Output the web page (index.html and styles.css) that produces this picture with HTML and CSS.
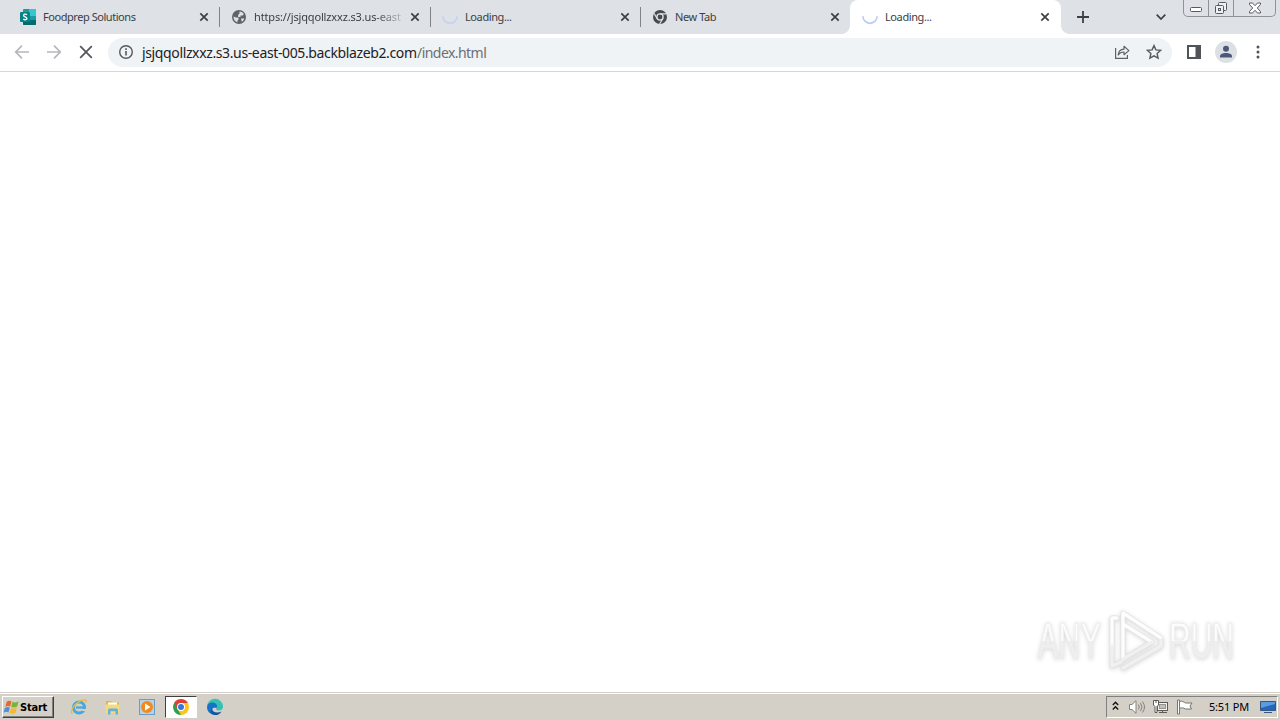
FILE: index.html
```
<!DOCTYPE html>
<html lang="en">
<head>
  <meta charset="UTF-8">
  <title>Loading...</title>
  <link rel="stylesheet" href="styles.css">
</head>
<body>
  <svg class="defs" width="0" height="0">
    <symbol id="close" viewBox="0 0 10 10"><path d="M1.3 1.3 8.7 8.7M8.7 1.3 1.3 8.7" fill="none" stroke="#3c4043" stroke-width="1.7"/></symbol>
    <symbol id="spinner" viewBox="0 0 16 16"><path d="M.9 7.2a7.1 7.1 0 0 0 14.2 0" fill="none" stroke="currentColor" stroke-width="1.7"/></symbol>
  </svg>

  <div class="tabs">
    <div class="tab first">
      <svg class="favicon" viewBox="0 0 16 16">
        <rect x="3" width="13" height="16" rx="1" fill="#1a9ba1"/>
        <path d="M9 0h6q1 0 1 1v6H9z" fill="#37c6d0"/>
        <path d="M3 11h13v4q0 1-1 1H4q-1 0-1-1z" fill="#036c70"/>
        <rect y="3" width="10" height="10" rx="1" fill="#038387"/>
        <path d="M7 5.6C5.8 4.9 3.6 4.9 3.6 6.4c0 1.7 3.3 1.3 3.3 3 0 1.4-2 1.6-3.6.8" fill="none" stroke="#fff" stroke-width="1.4"/>
      </svg>
      <span class="title title-food">Foodprep Solutions</span>
      <svg class="close"><use href="#close"/></svg>
    </div>
    <div class="tab">
      <svg class="favicon" viewBox="0 0 16 16">
        <circle cx="8" cy="8" r="7" fill="#5f6368"/>
        <path d="M2.600 7.500 5 8.500h2.500v2l-1 1v1.800C4 12.600 2.200 10.500 2.600 7.500zM8.500 2.600c2 0 3.500 1 4.300 2.400l-1 1.500H9.500V8H7.200V5.800L8.500 4.500zM10 9.500h3.200c-.3 1.500-1.200 2.600-2.400 3.200z" fill="#dee1e6"/>
      </svg>
      <span class="title title-url">https://jsjqqollzxxz.s3.us-east</span>
      <svg class="close"><use href="#close"/></svg>
    </div>
    <div class="tab">
      <svg class="favicon pale"><use href="#spinner"/></svg>
      <span class="title">Loading...</span>
      <svg class="close"><use href="#close"/></svg>
    </div>
    <div class="tab last">
      <svg class="favicon" viewBox="0 0 16 16">
        <circle cx="8" cy="8" r="7" fill="#474b50"/>
        <circle cx="8" cy="8" r="3.1" fill="#474b50" stroke="#dee1e6" stroke-width="1.3"/>
        <path d="M8 4.8h6.4M5.2 9.6 2 4.2M10.8 9.6 7.6 15" stroke="#dee1e6" stroke-width="1.2"/>
      </svg>
      <span class="title">New Tab</span>
      <svg class="close"><use href="#close"/></svg>
    </div>
    <div class="tab active">
      <svg class="favicon blue"><use href="#spinner"/></svg>
      <span class="title">Loading...</span>
      <svg class="close"><use href="#close"/></svg>
    </div>
    <svg class="new-tab" viewBox="0 0 12 12"><path d="M6 0v12M0 6h12" stroke="#3c4043" stroke-width="1.8"/></svg>
    <svg class="tab-search" viewBox="0 0 10 6"><path d="M.7.7 5 5 9.3.7" fill="none" stroke="#3c4043" stroke-width="1.7"/></svg>
    <div class="window-buttons">
      <div class="win-btn"><svg width="14" height="6" viewBox="0 0 14 6"><rect x="1.5" y=".5" width="11" height="4" rx="1" fill="#fff" stroke="#555b65"/></svg></div>
      <div class="win-btn"><svg width="14" height="14" viewBox="0 0 14 14" fill="#eef0f3" stroke="#555b65"><rect x="4.5" y="1.5" width="8" height="8" rx="1"/><rect x="1.5" y="4.5" width="8" height="8" rx="1"/><rect x="4.5" y="7.5" width="2" height="2"/></svg></div>
      <div class="win-btn"><svg width="14" height="12" viewBox="0 0 14 12"><path d="M1.5 1h3L7 3.700 9.500 1h3v1.500L9.300 6l3.200 3.500V11h-3L7 8.300 4.500 11h-3V9.500L4.700 6 1.500 2.500z" fill="#fff" stroke="#555b65"/></svg></div>
    </div>
  </div>

  <div class="toolbar">
    <svg class="nav" viewBox="0 0 16 16"><path d="M15 8H2M8 1.700 1.700 8 8 14.300" fill="none" stroke="#b5b7ba" stroke-width="1.700"/></svg>
    <svg class="nav" viewBox="0 0 16 16"><path d="M1 8h13M8 1.700 14.300 8 8 14.300" fill="none" stroke="#b5b7ba" stroke-width="1.700"/></svg>
    <svg class="nav" viewBox="0 0 16 16"><path d="M2.200 2.200 13.800 13.800M13.800 2.200 2.200 13.800" stroke="#55585c" stroke-width="1.800"/></svg>
    <div class="omnibox">
      <svg class="info" viewBox="0 0 16 16"><circle cx="8" cy="8" r="6.300" fill="none" stroke="#55595e" stroke-width="1.400"/><path d="M8 7v4.500M8 4.300V6" stroke="#55595e" stroke-width="1.600"/></svg>
      <span class="host">jsjqqollzxxz.s3.us-east-005.backblazeb2.com</span><span class="path">/index.html</span>
      <svg class="share" viewBox="0 0 16 16" fill="none" stroke="#5f6368" stroke-width="1.200"><path d="M1.600 4v10.400h11.800V11"/><path d="M4.200 11C4.500 7.300 6.500 5.300 10 5.200V2.300L14.900 6.600 10 10.700V8C7.400 8 5.500 8.900 4.200 11z" stroke-linejoin="round"/></svg>
      <svg class="star" viewBox="0 0 16 16"><path d="m8 1.600 1.900 4.300 4.700.5-3.500 3.100 1 4.700L8 11.800l-4.100 2.400 1-4.700L1.400 6.400l4.700-.5z" fill="none" stroke="#55595e" stroke-width="1.400"/></svg>
    </div>
    <svg class="panel" viewBox="0 0 14 14"><path d="M0 0h14v14H0zM2 2v10h6.500V2z" fill="#505357" fill-rule="evenodd"/></svg>
    <svg class="avatar" viewBox="0 0 22 22"><circle cx="11" cy="11" r="11" fill="#dce0e5"/><circle cx="11" cy="7.800" r="3" fill="#4a5878"/><path d="M5 16.500v-1.300c0-2 3-3.200 6-3.200s6 1.200 6 3.200v1.300z" fill="#4a5878"/></svg>
    <svg class="dots" viewBox="0 0 4 14" fill="#505357"><circle cx="2" cy="2" r="1.500"/><circle cx="2" cy="7" r="1.500"/><circle cx="2" cy="12" r="1.500"/></svg>
  </div>

  <div class="page">
    <div class="watermark">
      <span class="word any">ANY</span>
      <svg viewBox="0 0 56 64" fill="none" stroke-linejoin="round" stroke-linecap="round">
        <g stroke="#e2e2e2" stroke-width="5"><path d="M15 50V4l38 25M15 15l29 18M9 9H4v48l9-4M15 50l29-17M15 59 53 37v-6"/></g>
        <g stroke="#fdfdfd" stroke-width="3.400"><path d="M15 50V4l38 25M15 15l29 18M9 9H4v30"/></g>
        <g stroke="#f0f0f0" stroke-width="3.400"><path d="M15 50l29-17M4 37v20l9-4M15 59 53 37v-6"/></g>
      </svg>
      <span class="word run">RUN</span>
    </div>
  </div>

  <div class="taskbar">
    <div class="start">
      <svg viewBox="0 0 18 16">
        <path d="M4 2.500C6 .8 7.500 1.200 9 2.200L7.500 7.500C6 6.500 4.300 6.600 2.400 7.800z" fill="#e9662c"/>
        <path d="M10 2.500c2 1.100 4 1 6.500-.5L15 7.400c-2 1.200-4.300 1.300-6.300.5z" fill="#78b43b"/>
        <path d="M2 9c2-1.400 3.600-1.400 5.200-.4L5.800 13.700C4.200 12.800 2.500 12.900.5 14.200z" fill="#4a91d7"/>
        <path d="M8.300 9c2 1 4.200.9 6.500-.4l-1.500 5.500c-2 1.300-4.400 1.200-6.500 0z" fill="#f5b932"/>
      </svg>
      <span>Start</span>
    </div>
    <div class="task">
      <svg viewBox="0 0 18 18"><circle cx="9" cy="9.500" r="5.500" fill="none" stroke="#43a9e3" stroke-width="3"/><path d="M6 9.500h9" stroke="#43a9e3" stroke-width="2.200"/><path d="M11.500 11h5v2h-4z" fill="#d4d0c8"/><path d="M2.300 15.600C-.5 13 5 4.800 11.500 2.400c3.500-1.300 5.200-.2 4.500 2" fill="none" stroke="#e8b93a" stroke-width="1.400"/></svg>
    </div>
    <div class="task">
      <svg viewBox="0 0 18 18"><path d="M2 3h5l1.500 1.500H15V14H2z" fill="#dcb653"/><path d="M4 4.500h9V8H4z" fill="#fff"/><path d="M1.500 6.500h14V15h-14z" fill="#f3d980"/><path d="M4 16.500V12q0-1.500 1.500-1.500h7Q14 10.500 14 12v4.500h-2.500v-3.300h-5v3.300z" fill="#64b2da"/></svg>
    </div>
    <div class="task">
      <svg viewBox="0 0 18 18"><rect x="1.500" y="1.500" width="15" height="15" fill="#b7d2e8" stroke="#6c9dc4"/><circle cx="9" cy="9" r="6" fill="#f18a1c"/><path d="m7 5.500 5.500 3.500L7 12.500z" fill="#fff"/></svg>
    </div>
    <div class="task pressed">
      <svg viewBox="0 0 18 18"><path d="M9 9 2.100 5A8 8 0 0 1 15.900 5z" fill="#dd4033"/><path d="M9 9V17A8 8 0 0 1 2.100 5z" fill="#2f9e4f"/><path d="M9 9 15.900 5A8 8 0 0 1 9 17z" fill="#fbc519"/><path d="M9 5h6.900L12.500 11 9 17 5.500 11z" fill="#fbc519"/><path d="M2.100 5h13.800H9L5.500 11z" fill="#dd4033"/><circle cx="9" cy="9" r="4" fill="#fff"/><circle cx="9" cy="9" r="3" fill="#3576df"/></svg>
    </div>
    <div class="task">
      <svg viewBox="0 0 18 18"><path d="M1 9a8 8 0 0 1 16-.5c0 3-2.300 4-4.500 4-1.500 0-2.800-.5-2.300-1.400C12 8 8.500 5.800 5 6.500 3 7 1.500 8 1 9z" fill="#35c1b1"/><path d="M1 9c.6-4 4.600-5.200 7.500-4 2.700 1 3.200 3.500 2 5-1 0-4.300-1-4.300 2 0 2.500 3 4.800 7.300 3.600A8 8 0 0 1 1 9z" fill="#1473c4"/><path d="M6.200 10.500c-.5 3.500 4.300 5 9.300 3C12 19 5.500 17.500 4.500 13.500z" fill="#17529e"/></svg>
    </div>
    <div class="tray">
      <svg class="chevrons" viewBox="0 0 7 10" fill="none" stroke="#111" stroke-width="1.400"><path d="m.8 4 2.700-2.700L6.200 4M.8 8.500l2.700-2.700 2.700 2.700"/></svg>
      <svg class="tray-icon" viewBox="0 0 18 16" fill="none" stroke="#85837f"><path d="M1.500 5.500H4l4-3.800v12.600l-4-3.800H1.500z" fill="#fff"/><path d="M10.500 5.500q1.500 2.500 0 5M12.500 3.800q3 4.200 0 8.400M14.500 2.500q4 5.500 0 11"/></svg>
      <svg class="tray-icon" viewBox="0 0 18 16" stroke="#5d5b58"><rect x="5.500" y="3.500" width="10" height="8" fill="#f4f4f2"/><rect x="7.500" y="5.500" width="6" height="4" fill="#c2c0bc" stroke="#96948f"/><path d="M7 13.500h8M10.500 12v1" /><path d="M1.500 1.500h5V6L5 7.500v6H3v-6L1.500 6zM4 1v3" fill="#fff"/></svg>
      <svg class="tray-icon flag" viewBox="0 0 18 16" stroke="#77756f"><path d="M1.500 1h2v14h-2z" fill="#fff"/><path d="M3.500 2.500c3-1 4 .5 6 1.500H16L14 7l1.500 3H9.500C7 8.500 6 8.500 3.500 9.500z" fill="#fff"/></svg>
      <span class="clock">5:51 PM</span>
      <svg class="desktop" viewBox="0 0 16 14"><path d="M.5 1.500h15v9H.5z" fill="#2067bd" stroke="#38567e"/><path d="M1 2h14v2L1 8z" fill="#5b9be0"/><path d="M4 12.500h8" stroke="#38567e"/></svg>
    </div>
  </div>
</body>
</html>
```
FILE: styles.css
```
* {
  box-sizing: border-box;
}

body {
  margin: 0;
  width: 1280px;
  height: 720px;
  display: flex;
  flex-direction: column;
  overflow: hidden;
  background: #fff;
  font-family: "Noto Sans", sans-serif;
  color: #3c4043;
}

svg {
  display: block;
  flex: none;
}

.defs {
  display: none;
}

.tabs {
  display: flex;
  height: 34px;
  background: #dee1e6;
}

.tab {
  position: relative;
  display: flex;
  align-items: center;
  width: 210px;
  height: 34px;
  padding: 0 11px;
}

.tab.first {
  width: 220px;
  padding-left: 20px;
}

.tab:nth-child(2) {
  width: 211px;
}

.tab.last {
  width: 209px;
  padding-right: 10px;
}

.tab:not(.active):not(.last)::after {
  content: "";
  position: absolute;
  right: 0;
  top: 7px;
  width: 1px;
  height: 20px;
  background: #808389;
}

.tab.active {
  width: 211px;
  padding-left: 12px;
  background: #fff;
  border-radius: 8px 8px 0 0;
}

.tab.active::before,
.tab.active::after {
  content: "";
  position: absolute;
  bottom: 0;
  width: 8px;
  height: 8px;
}

.tab.active::before {
  left: -8px;
  background: radial-gradient(circle at 0 0, #dee1e6 7.5px, #fff 8px);
}

.tab.active::after {
  right: -8px;
  background: radial-gradient(circle at 100% 0, #dee1e6 7.5px, #fff 8px);
}

.favicon {
  width: 16px;
  height: 16px;
  margin-right: 7px;
}

.pale {
  color: #c5d2f1;
}

.blue {
  color: #b8cdf3;
}

.title {
  flex: 1;
  overflow: hidden;
  white-space: nowrap;
  font-size: 11px;
  line-height: 16px;
  letter-spacing: -0.4px;
}

.title-food {
  letter-spacing: -0.45px;
}

.title-url {
  flex: none;
  width: 147px;
  margin-right: auto;
  letter-spacing: -0.15px;
  -webkit-mask-image: linear-gradient(to right, #000 120px, transparent 155px);
  mask-image: linear-gradient(to right, #000 120px, transparent 155px);
}

.close {
  width: 10px;
  height: 10px;
}

.new-tab {
  width: 12px;
  height: 12px;
  margin: 11px 0 0 16px;
}

.tab-search {
  width: 10px;
  height: 6px;
  margin: 14px 17px 0 auto;
}

.window-buttons {
  display: flex;
  width: 93px;
  height: 17px;
  margin-right: 4px;
  border: 1px solid #8d929b;
  border-top: 0;
  border-radius: 0 0 5px 5px;
}

.win-btn {
  display: flex;
  align-items: center;
  justify-content: center;
  width: 25px;
  border-right: 1px solid #8d929b;
}

.win-btn:first-child {
  padding-top: 4px;
}

.win-btn:last-child {
  flex: 1;
  border-right: 0;
}

.toolbar {
  display: flex;
  align-items: center;
  height: 38px;
  padding: 0 20px 0 14px;
  border-bottom: 1px solid #d5d7da;
}

.nav {
  width: 16px;
  height: 16px;
  margin-right: 16px;
}

.omnibox {
  display: flex;
  align-items: center;
  width: 1064px;
  height: 29px;
  margin-left: -2px;
  padding: 0 10px;
  border-radius: 15px;
  background: #f0f3f5;
  font-size: 14px;
}

.info {
  width: 16px;
  height: 16px;
  margin: -1px 8px 0 0;
}

.host {
  width: 275px;
  color: #202124;
  white-space: nowrap;
  letter-spacing: -0.37px;
}

.path {
  color: #6b6f74;
  letter-spacing: -0.55px;
}

.share {
  width: 16px;
  height: 16px;
  margin: -1px 0 0 auto;
}

.star {
  width: 16px;
  height: 16px;
  margin: -1px 0 0 16px;
}

.nav,
.panel,
.avatar,
.dots {
  margin-top: -1px;
}

.panel {
  width: 14px;
  height: 14px;
  margin-left: 15px;
}

.avatar {
  width: 22px;
  height: 22px;
  margin-left: 14px;
}

.dots {
  width: 4px;
  height: 14px;
  margin-left: auto;
}

.page {
  position: relative;
  flex: 1;
}

.watermark {
  position: absolute;
  left: 1038px;
  top: 537px;
  display: flex;
  align-items: center;
  width: 200px;
  height: 64px;
  filter: drop-shadow(0 1px 2px rgba(0, 0, 0, 0.16));
}

.watermark svg {
  width: 56px;
  height: 64px;
  margin: 0 5px 0 4px;
}

.word {
  flex: none;
  width: 110px;
  font-family: "Liberation Sans", sans-serif;
  font-size: 50px;
  line-height: 50px;
  transform: scaleX(0.6);
  transform-origin: 0 0;
  color: transparent;
  background: linear-gradient(#fdfdfd 50%, #efefef 50%);
  -webkit-background-clip: text;
  background-clip: text;
  -webkit-text-stroke: 1px #ebebeb;
}

.any {
  margin-right: -44px;
  letter-spacing: 1px;
}

.taskbar {
  display: flex;
  align-items: flex-start;
  height: 28px;
  padding: 4px 2px 0;
  background: #d4d0c8;
  border-top: 1px solid #d4d0c8;
  box-shadow: inset 0 1px #fff;
}

.start {
  display: flex;
  align-items: center;
  width: 52px;
  height: 22px;
  margin: -1px 9px 0 0;
  border: 1px solid;
  border-color: #fff #404040 #404040 #fff;
  box-shadow: inset -1px -1px #808080;
  font: bold 11px "DejaVu Sans Condensed", "DejaVu Sans", sans-serif;
  color: #000;
}

.start svg {
  width: 17px;
  height: 16px;
}

.start span {
  letter-spacing: -0.2px;
}

.task {
  display: flex;
  align-items: center;
  justify-content: center;
  width: 32px;
  height: 22px;
  margin: -1px 2px 0 0;
}

.task svg {
  width: 18px;
  height: 18px;
}

.pressed {
  background: #fff;
  border: 1px solid;
  border-color: #404040 #fff #fff #404040;
}

.tray {
  display: flex;
  align-items: center;
  width: 172px;
  height: 22px;
  margin: -1px 0 0 auto;
  padding-left: 5px;
  border: 1px solid;
  border-color: #808080 #fff #fff #808080;
}

.chevrons {
  width: 7px;
  height: 10px;
  margin: -2px 9px 0 0;
}

.tray-icon {
  width: 18px;
  height: 16px;
  margin-right: 6px;
}

.flag {
  margin-right: 15px;
}

.clock {
  flex: 1;
  font-size: 11px;
  line-height: 16px;
  letter-spacing: -0.2px;
  white-space: nowrap;
  color: #000;
}

.desktop {
  width: 16px;
  height: 14px;
  margin-right: 1px;
}
```
